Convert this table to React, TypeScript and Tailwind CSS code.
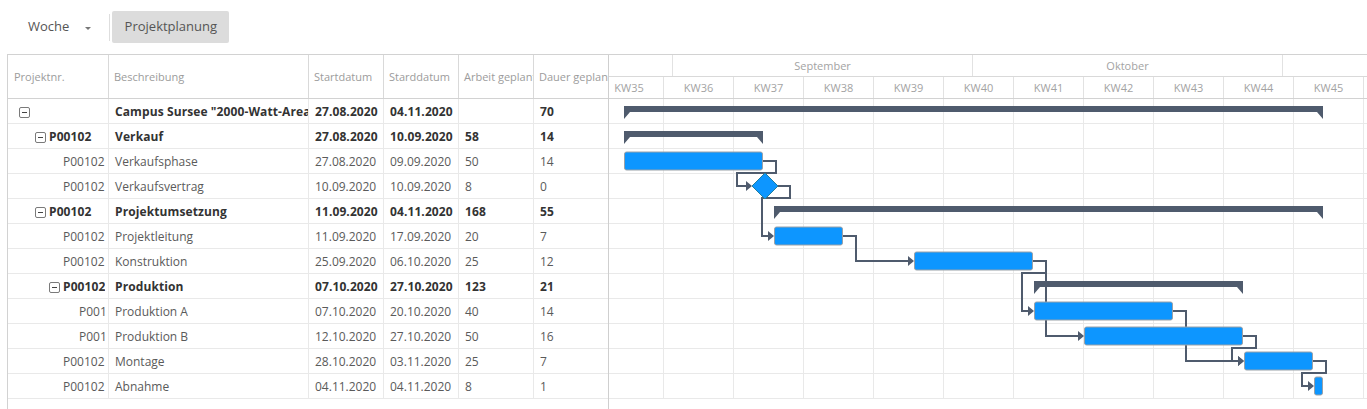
import React from "react";

type Row = {
  nr: string;
  desc: string;
  start: string;
  end: string;
  work: string;
  dur: string;
  bold?: boolean;
  box?: boolean;
  indent: number;
};

const rows: Row[] = [
  { nr: "", desc: 'Campus Sursee "2000-Watt-Areal"', start: "27.08.2020", end: "04.11.2020", work: "", dur: "70", bold: true, box: true, indent: 11 },
  { nr: "P00102", desc: "Verkauf", start: "27.08.2020", end: "10.09.2020", work: "58", dur: "14", bold: true, box: true, indent: 27 },
  { nr: "P00102", desc: "Verkaufsphase", start: "27.08.2020", end: "09.09.2020", work: "50", dur: "14", indent: 55 },
  { nr: "P00102", desc: "Verkaufsvertrag", start: "10.09.2020", end: "10.09.2020", work: "8", dur: "0", indent: 55 },
  { nr: "P00102", desc: "Projektumsetzung", start: "11.09.2020", end: "04.11.2020", work: "168", dur: "55", bold: true, box: true, indent: 27 },
  { nr: "P00102", desc: "Projektleitung", start: "11.09.2020", end: "17.09.2020", work: "20", dur: "7", indent: 55 },
  { nr: "P00102", desc: "Konstruktion", start: "25.09.2020", end: "06.10.2020", work: "25", dur: "12", indent: 55 },
  { nr: "P00102", desc: "Produktion", start: "07.10.2020", end: "27.10.2020", work: "123", dur: "21", bold: true, box: true, indent: 41 },
  { nr: "P00102", desc: "Produktion A", start: "07.10.2020", end: "20.10.2020", work: "40", dur: "14", indent: 71 },
  { nr: "P00102", desc: "Produktion B", start: "12.10.2020", end: "27.10.2020", work: "50", dur: "16", indent: 71 },
  { nr: "P00102", desc: "Montage", start: "28.10.2020", end: "03.11.2020", work: "25", dur: "7", indent: 55 },
  { nr: "P00102", desc: "Abnahme", start: "04.11.2020", end: "04.11.2020", work: "8", dur: "1", indent: 55 },
];

const weeks = ["KW36", "KW37", "KW38", "KW39", "KW40", "KW41", "KW42", "KW43", "KW44", "KW45"];

// row top line in page px
const line = (i: number) => 98 + 25 * i;

const summaries = [
  { row: 0, l: 624, r: 1323 },
  { row: 1, l: 624, r: 763 },
  { row: 4, l: 774, r: 1323 },
  { row: 7, l: 1034, r: 1243 },
];

const tasks = [
  { row: 2, l: 624, r: 763 },
  { row: 5, l: 774, r: 843 },
  { row: 6, l: 914, r: 1033 },
  { row: 8, l: 1034, r: 1173 },
  { row: 9, l: 1084, r: 1243 },
  { row: 10, l: 1244, r: 1313 },
  { row: 11, l: 1314, r: 1323 },
];

const links = [
  { d: "M763 161 H776 V173 H737 V186 H747", tip: 752, y: 186 },
  { d: "M778 186 H790 V198 H762 V236 H769", tip: 774, y: 236 },
  { d: "M843 236 H856 V261 H909", tip: 914, y: 261 },
  { d: "M1033 261 H1046 V273 H1022 V311 H1029", tip: 1034, y: 311 },
  { d: "M1046 273 V336 H1079", tip: 1084, y: 336 },
  { d: "M1173 311 H1186 V361 H1239", tip: 1244, y: 361 },
  { d: "M1243 336 H1256 V348 H1232 V361 H1239", tip: 1244, y: 361 },
  { d: "M1313 361 H1326 V373 H1302 V386 H1309", tip: 1314, y: 386 },
];

function MinusBox() {
  return (
    <span className="flex h-[11px] w-[11px] shrink-0 items-center justify-center rounded-[2px] border border-[#7a7a7a] bg-white">
      <span className="h-px w-[5px] bg-[#444]" />
    </span>
  );
}

function GanttBody() {
  const dark = "#4f5b6d";
  return (
    <svg width={758} height={310} viewBox="609 99 758 310" className="block">
      {Array.from({ length: 11 }, (_, k) => (
        <line key={"v" + k} x1={663.5 + 70 * k} x2={663.5 + 70 * k} y1={99} y2={398.5} stroke="#e9e9e9" />
      ))}
      {Array.from({ length: 12 }, (_, k) => (
        <line key={"h" + k} x1={609} x2={1367} y1={123.5 + 25 * k} y2={123.5 + 25 * k} stroke="#e9e9e9" />
      ))}
      {links.map((c, i) => (
        <g key={"c" + i}>
          <path d={c.d} fill="none" stroke={dark} strokeWidth={2} />
          <polygon points={`${c.tip},${c.y} ${c.tip - 6},${c.y - 5} ${c.tip - 6},${c.y + 5}`} fill={dark} />
        </g>
      ))}
      {summaries.map((s) => {
        const t = line(s.row) + 8;
        return (
          <polygon
            key={"s" + s.row}
            points={`${s.l},${t} ${s.r},${t} ${s.r},${t + 13} ${s.r - 6},${t + 6} ${s.l + 6},${t + 6} ${s.l},${t + 13}`}
            fill={dark}
          />
        );
      })}
      {tasks.map((b) => (
        <rect
          key={"b" + b.row}
          x={b.l + 0.5}
          y={line(b.row) + 4}
          width={b.r - b.l - 1}
          height={18}
          rx={2}
          fill="#0d96ff"
          stroke="#9aa1a8"
        />
      ))}
      <polygon points="765,173 778,186 765,199 752,186" fill="#0d96ff" stroke="#21809f" />
    </svg>
  );
}

export default function App() {
  const cols = ["w-[200px]", "w-[75px]", "w-[75px]", "w-[75px]", "w-[74px]"];
  return (
    <div className="h-[409px] w-[1367px] overflow-hidden bg-white font-['Open_Sans',sans-serif]">
      {/* toolbar */}
      <div className="flex h-[54px] items-center">
        <div className="ml-[28px] flex items-center text-[13px] text-[#555]">
          Woche
          <span className="ml-[16px] mt-[2px] h-0 w-0 border-x-[3px] border-t-[3px] border-x-transparent border-t-[#777]" />
        </div>
        <div className="ml-[18px] h-[27px] w-px bg-[#dedede]" />
        <div className="ml-[2px] flex h-[32px] w-[117px] items-center justify-center rounded-[2px] bg-[#dcdcdc] text-[13px] text-[#555]">
          Projektplanung
        </div>
      </div>

      <div className="ml-[7px] flex h-[355px] border-t border-[#d2d2d2]">
        {/* grid */}
        <div className="h-full w-[601px] border-l border-[#d2d2d2]">
          <div className="flex h-[44px] border-b border-[#d2d2d2] pt-[2px] text-[11px] text-[#9c9c9c]">
            {["Projektnr.", "Beschreibung", "Startdatum", "Starddatum", "Arbeit geplant", "Dauer geplant"].map((h, i) => (
              <div
                key={h}
                className={`-mt-[2px] flex items-center overflow-hidden whitespace-nowrap pl-[5px] pt-[2px] ${i === 0 ? "w-[101px] pl-[6px]" : cols[i - 1]} ${i < 5 ? "border-r border-[#d9d9d9]" : ""}`}
              >
                {h}
              </div>
            ))}
          </div>
          {rows.map((r, i) => (
            <div
              key={i}
              className={`flex h-[25px] border-b border-[#e9e9e9] text-[12px] ${r.bold ? "font-bold tracking-[0.1px] text-[#333]" : "text-[#5a5a5a]"}`}
            >
              <div className="w-[101px] border-r border-[#e9e9e9] pr-[3px]">
                <div className="flex h-full items-center overflow-hidden whitespace-nowrap pt-[2px]" style={{ paddingLeft: r.indent }}>
                  {r.box && <MinusBox />}
                  {r.nr && <span className={r.box ? "ml-[3px]" : ""}>{r.nr}</span>}
                </div>
              </div>
              {[r.desc, r.start, r.end, r.work, r.dur].map((v, k) => (
                <div
                  key={k}
                  className={`flex items-center overflow-hidden whitespace-nowrap pl-[6px] pt-[2px] ${cols[k]} ${k < 4 ? "border-r border-[#e9e9e9]" : ""}`}
                >
                  {v}
                </div>
              ))}
            </div>
          ))}
        </div>

        {/* gantt */}
        <div className="h-full w-[759px] border-l border-[#cfcfcf]">
          <div className="flex h-[22px] border-b border-[#d9d9d9] pt-[2px] text-[11px] text-[#a3a3a3]">
            <div className="-mt-[2px] w-[64px] border-r border-[#e2e2e2]" />
            <div className="-mt-[2px] flex w-[300px] items-center justify-center border-r border-[#e2e2e2] pt-[2px]">September</div>
            <div className="-mt-[2px] flex w-[310px] items-center justify-center border-r border-[#e2e2e2] pt-[2px]">Oktober</div>
            <div className="flex-1" />
          </div>
          <div className="flex h-[22px] border-b border-[#d2d2d2] text-[11px] text-[#a3a3a3]">
            <div className="w-[55px] overflow-hidden border-r border-[#e2e2e2]">
              <div className="ml-[-15px] flex h-full w-[70px] items-center justify-center pt-[2px]">KW35</div>
            </div>
            {weeks.map((w) => (
              <div key={w} className="flex w-[70px] items-center justify-center border-r border-[#e2e2e2] pt-[2px]">
                {w}
              </div>
            ))}
          </div>
          <GanttBody />
        </div>
      </div>
    </div>
  );
}
